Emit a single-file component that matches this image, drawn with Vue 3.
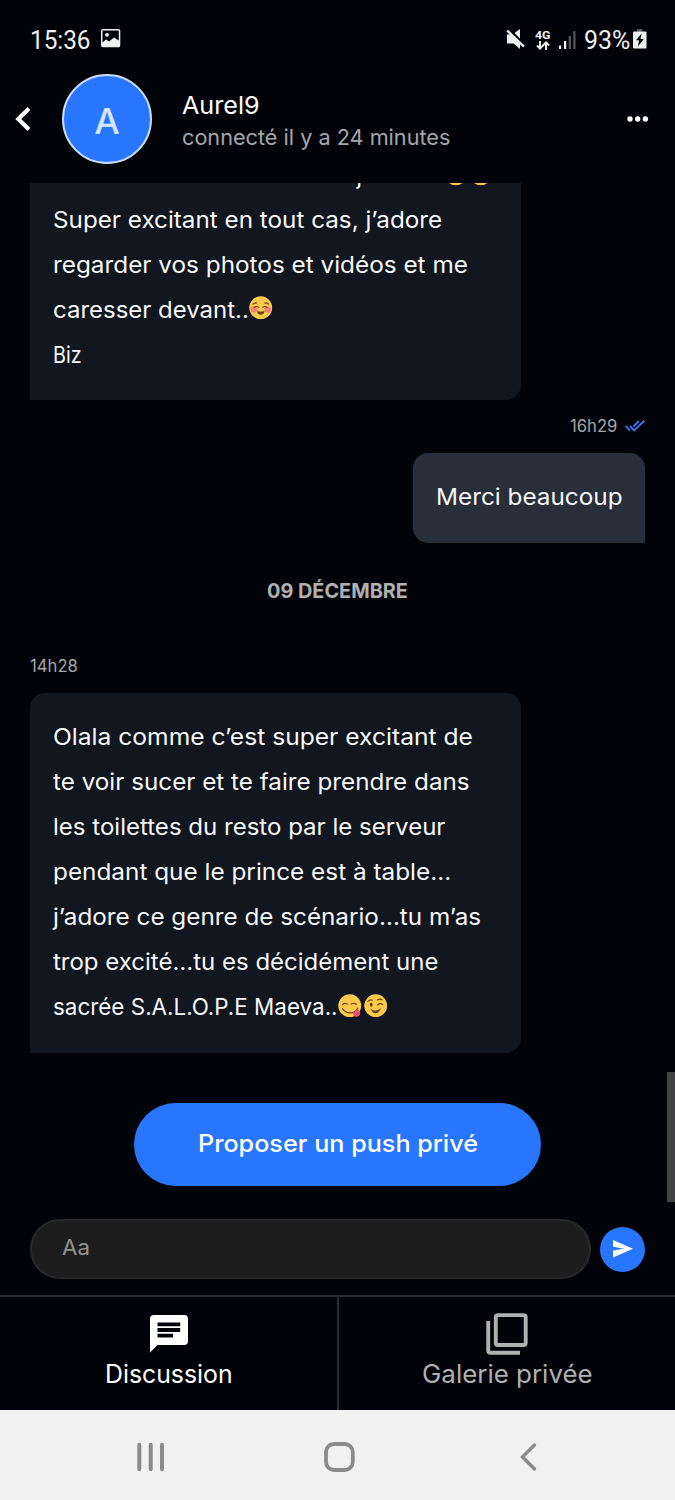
<script setup>
const firstMessage = [
  { text: 'Super excitant en tout cas, j’adore', width: 389 },
  { text: 'regarder vos photos et vidéos et me', width: 415 },
  { text: 'caresser devant..', width: 196, emojis: ['blush'] },
  { text: 'Biz', width: 29 },
]

const secondMessage = [
  { text: 'Olala comme c’est super excitant de', width: 420 },
  { text: 'te voir sucer et te faire prendre dans', width: 417 },
  { text: 'les toilettes du resto par le serveur', width: 392 },
  { text: 'pendant que le prince est à table…', width: 398 },
  { text: 'j’adore ce genre de scénario…tu m’as', width: 428 },
  { text: 'trop excité…tu es décidément une', width: 385 },
  { text: 'sacrée S.A.L.O.P.E Maeva..', width: 285, emojis: ['yum', 'wink'] },
]

// Stretches the text of an element horizontally to a given width.
const vFit = {
  mounted(el, { value }) {
    const apply = () => {
      const natural = el.offsetWidth
      el.style.transform = `scaleX(${value / natural})`
      el.style.marginRight = `${value - natural}px`
    }
    apply()
    document.fonts?.ready.then(apply)
  },
}
</script>

<template>
  <div class="phone">
    <svg class="defs" width="0" height="0" aria-hidden="true">
      <symbol id="blush" viewBox="0 0 24 24">
        <circle cx="12" cy="12" r="11.700" fill="#fdc94b" />
        <circle cx="5" cy="13.800" r="3.400" fill="#f47f72" />
        <circle cx="19" cy="13.800" r="3.400" fill="#f47f72" />
        <g fill="none" stroke="#674117" stroke-width="1.100" stroke-linecap="round">
          <path d="M4 8.300Q5.400 7 7.800 7M16.200 7Q18.600 7 20 8.300M5.500 11.600Q8 9.800 10 11.600M14 11.600Q16 9.800 18.500 11.600" />
          <path d="M9 16.200Q12 17.200 15 16.200Q14.500 18.500 12 18.500Q9.500 18.500 9 16.200Z" fill="#674117" />
        </g>
      </symbol>
      <symbol id="yum" viewBox="0 0 24 24">
        <circle cx="12" cy="12" r="11.700" fill="#fdc94b" />
        <g fill="none" stroke="#674117" stroke-width="1.200" stroke-linecap="round">
          <path d="M4.500 10.800Q7 8.500 9.500 10.300M13.500 10.300Q16 8.500 18.500 10.500" />
          <path d="M4.500 15Q8 20 13.500 19.200Q18.500 18.600 20 14.500" />
        </g>
        <path d="M15.500 18.700Q18 17.800 19.500 15.700Q22.500 16.500 22.600 20Q21.700 23.500 18.300 23.300Q15.200 22.800 15.500 18.700Z" fill="#e84c72" />
      </symbol>
      <symbol id="wink" viewBox="0 0 24 24">
        <circle cx="12" cy="12" r="11.700" fill="#fdc94b" />
        <ellipse cx="7.300" cy="11" rx="1.500" ry="2" fill="#674117" />
        <g fill="none" stroke="#674117" stroke-width="1.200" stroke-linecap="round">
          <path d="M4 7.500Q6 5.500 8.500 6.300M14 6Q16.500 4.500 18.500 6M14 11Q16.500 8.800 19 10.700" />
          <path d="M8 16.500Q12 18.700 16 16.200Q14.700 19 12 19Q9.500 19 8 16.500Z" fill="#674117" />
        </g>
      </symbol>
    </svg>

    <div class="status">
      <span v-fit="61" class="clock">15:36</span>
      <svg class="gallery" width="20" height="19" viewBox="0 0 20 19">
        <path fill="#f0f0f0" fill-rule="evenodd" d="M2 0H17.500Q19.300 0 19.300 2V16.300Q19.300 18.300 17.500 18.300H2Q0 18.300 0 16.300V2Q0 0 2 0ZM1.500 1.500V13.500L5 10.500L8 12.500L13 8.500L17.800 11.500V1.500Z" />
        <circle cx="6" cy="5.800" r="1.900" fill="#f0f0f0" />
      </svg>
      <span class="grow"></span>
      <svg class="mute" width="20" height="21" viewBox="0 0 20 21">
        <path d="M1 5.500H4L14 15V20L7.500 14.500H1ZM8.500 4L14 0V9.500Z" fill="#f0f0f0" />
        <path d="M1.200 1.700L18 17.700" stroke="#f0f0f0" stroke-width="2.300" />
      </svg>
      <span class="network">
        <span v-fit="15" class="generation">4G</span>
        <svg width="14" height="9" viewBox="0 0 14 9" fill="none" stroke="#e8e8e8" stroke-width="2">
          <path d="M4 0V7.500M1 4.500L4 7.500L7 4.500M10 9V1.500M7 4.500L10 1.500L13 4.500" />
        </svg>
      </span>
      <svg class="signal" width="17" height="18" viewBox="0 0 17 18">
        <path d="M0 14.500h2.200V18H0zM5 10h2.200v8H5z" fill="#f0f0f0" />
        <path d="M9.700 5h2.200v13H9.700zM14.300 0h2.200v18h-2.200z" fill="#55575a" />
      </svg>
      <span v-fit="46" class="percent">93%</span>
      <svg class="battery" width="14" height="20" viewBox="0 0 14 20">
        <path d="M4 0h5.500v3H4z" fill="#555" />
        <path d="M1 2.500H12.500Q13.500 2.500 13.500 3.500V18.500Q13.500 19.500 12.500 19.500H1Q0 19.500 0 18.500V3.500Q0 2.500 1 2.500Z" fill="#f0f0f0" />
        <path d="M8.500 4.500L3 11.300H6L5 17.500L10.700 10H7.500Z" fill="#08090c" />
      </svg>
    </div>

    <header class="header">
      <svg class="back" width="16" height="24" viewBox="0 0 16 24" fill="none" stroke="#fff" stroke-width="4.200">
        <path d="M14 1.500L3.300 12L14 22.500" />
      </svg>
      <div class="avatar">A</div>
      <div class="identity">
        <div class="name"><span v-fit="78">Aurel9</span></div>
        <div class="presence"><span v-fit="268">connecté il y a 24 minutes</span></div>
      </div>
      <svg class="more" width="22" height="6" viewBox="0 0 22 6" fill="#fff">
        <circle cx="3" cy="3" r="2.700" /><circle cx="10.700" cy="3" r="2.700" /><circle cx="18.400" cy="3" r="2.700" />
      </svg>
    </header>

    <main class="chat">
      <section class="bubble received clipped">
        <div class="line partial">
          <span class="stub">j</span>
          <svg class="emoji"><use href="#blush" /></svg>
          <svg class="emoji"><use href="#blush" /></svg>
        </div>
        <div v-for="line in firstMessage" :key="line.text" class="line">
          <span v-fit="line.width">{{ line.text }}</span>
          <svg v-for="emoji in line.emojis" :key="emoji" class="emoji"><use :href="'#' + emoji" /></svg>
        </div>
      </section>

      <div class="meta sent-meta">
        <span v-fit="47">16h29</span>
        <svg width="20" height="12" viewBox="0 0 20 12" fill="none" stroke="#4272e8" stroke-width="1.900">
          <path d="M.500 6L5 10.500M5 6L9.200 10.500L19.300 .700M8.500 6.500L14 1" />
        </svg>
      </div>
      <section class="bubble sent">
        <div class="line"><span v-fit="187">Merci beaucoup</span></div>
      </section>

      <h2 class="date"><span v-fit="141">09 DÉCEMBRE</span></h2>

      <div class="meta"><span v-fit="48">14h28</span></div>
      <section class="bubble received">
        <div v-for="line in secondMessage" :key="line.text" class="line">
          <span v-fit="line.width">{{ line.text }}</span>
          <svg v-for="emoji in line.emojis" :key="emoji" class="emoji"><use :href="'#' + emoji" /></svg>
        </div>
      </section>

      <button class="push"><span v-fit="280">Proposer un push privé</span></button>
    </main>

    <div class="composer">
      <div class="field"><span v-fit="28">Aa</span></div>
      <button class="send">
        <svg width="20" height="18" viewBox="0 0 20 18" fill="#fff">
          <path d="M0 0L20 8.700L0 17.400V10.600L11 8.700L0 6.800Z" />
        </svg>
      </button>
    </div>

    <nav class="tabs">
      <div class="tab active">
        <svg width="38" height="38" viewBox="0 0 38 38">
          <path fill="#fff" fill-rule="evenodd" d="M3.800 0H34.200Q38 0 38 3.800V26.200Q38 30 34.200 30H7.500L0 37.500V3.800Q0 0 3.800 0ZM7.500 7.500V11.300H30.200V7.500ZM7.500 13.100V16.900H30.200V13.100ZM7.500 18.800V22.500H23V18.800Z" />
        </svg>
        <span v-fit="128">Discussion</span>
      </div>
      <div class="tab">
        <svg class="stack" width="42" height="42" viewBox="0 0 42 42" fill="none" stroke="#b0b0b0" stroke-width="3.900">
          <rect x="9.800" y="2.100" width="29.900" height="29.900" rx="2" />
          <path d="M2.200 8V37.500Q2.200 39.800 4.500 39.800H34" />
        </svg>
        <span v-fit="171">Galerie privée</span>
      </div>
    </nav>

    <footer class="system">
      <svg width="675" height="90" viewBox="0 0 675 90" fill="none" stroke="#8b8b8b" stroke-linecap="round">
        <path stroke-width="4" d="M139.300 34.700V59.300M150.700 34.700V59.300M162 34.700V59.300" />
        <rect x="326" y="34" width="26.800" height="26" rx="8" stroke-width="3.800" />
        <path stroke-width="3.400" d="M534.500 35L522.500 47L534.500 59" />
      </svg>
    </footer>
    <div class="scrollbar"></div>
  </div>
</template>

<style>
body {
  margin: 0;
  background: #020308;
}
</style>

<style scoped>
.phone {
  position: relative;
  display: flex;
  flex-direction: column;
  width: 675px;
  height: 1500px;
  overflow: hidden;
  background: #020308;
  color: #f7f8fa;
  font-family: Inter, "Open Sans", sans-serif;
}
.phone * {
  box-sizing: border-box;
}
.phone span {
  display: inline-block;
  white-space: nowrap;
  transform-origin: left center;
}
.phone svg {
  display: block;
  flex: none;
}
.phone .defs {
  position: absolute;
}
button {
  border: 0;
  padding: 0;
  color: inherit;
  font: inherit;
}
.status {
  display: flex;
  align-items: center;
  flex: none;
  height: 73px;
  padding: 6px 28px 0 30px;
  font: 400 25.500px/30px Roboto, sans-serif;
  color: #f0f0f0;
}
.gallery {
  margin: -2px 0 0 10px;
}
.grow {
  flex: 1;
}
.mute {
  margin-right: 9px;
}
.phone .network {
  display: flex;
  flex-direction: column;
  align-items: center;
  width: 16px;
  margin-right: 8px;
}
.generation {
  align-self: flex-start;
  font: 700 11.500px/11px Roboto, sans-serif;
}
.signal {
  margin-right: 8px;
}
.battery {
  margin: -1px 0 0 3px;
}
.header {
  display: flex;
  flex: none;
  height: 109.500px;
  padding: 1px 26px 0 15px;
}
.back {
  margin-top: 33px;
}
.avatar {
  display: flex;
  align-items: center;
  justify-content: center;
  width: 90px;
  height: 90px;
  margin-left: 31px;
  padding-top: 4px;
  border: 2px solid #c9dcfb;
  border-radius: 50%;
  background: #2776fd;
  color: #d5e5ff;
  font-size: 36px;
  font-weight: 500;
}
.identity {
  flex: 1;
  margin-left: 30px;
  padding-top: 16px;
}
.name {
  height: 31px;
  color: #fff;
  font-size: 24.500px;
  line-height: 31px;
}
.presence {
  height: 33px;
  color: #a5a6a8;
  font-size: 21.500px;
  line-height: 32px;
}
.more {
  margin-top: 42px;
}
.chat {
  display: flex;
  flex: none;
  flex-direction: column;
  align-items: flex-start;
  height: 1036.500px;
  padding: 0 30px;
  overflow: hidden;
}
.bubble {
  flex: none;
  padding: 22.500px;
}
.received {
  width: 491px;
  border-radius: 15px 15px 15px 0;
  background: #12161e;
}
.clipped {
  margin-top: -30px;
  padding-top: 0;
}
.sent {
  align-self: flex-end;
  width: 232px;
  height: 90px;
  border-radius: 15px 15px 0 15px;
  background: #292e3b;
}
.line {
  display: flex;
  align-items: center;
  height: 45px;
  padding-bottom: 2px;
  font-size: 22.500px;
  line-height: 43px;
}
.emoji {
  width: 23.500px;
  height: 23.500px;
  margin: -2px 1px 0;
}
.partial {
  padding: 0 0 0 304px;
}
.stub {
  width: 86px;
}
.meta {
  display: flex;
  align-items: center;
  height: 52.500px;
  color: #a5a6a8;
  font-size: 17px;
}
.sent-meta {
  align-self: flex-end;
  gap: 8px;
}
.date {
  align-self: stretch;
  height: 97.500px;
  margin: 0;
  color: #b0b0b0;
  font-size: 20px;
  font-weight: 700;
  line-height: 97px;
  text-align: center;
}
.push {
  align-self: center;
  flex: none;
  width: 407px;
  height: 83px;
  margin-top: 50.500px;
  padding-bottom: 2px;
  border-radius: 42px;
  background: #2776fd;
  color: #fff;
  font-size: 24px;
  font-weight: 500;
}
.composer {
  display: flex;
  align-items: center;
  flex: none;
  gap: 9px;
  height: 75.500px;
  padding: 0 30px 15.500px;
}
.field {
  width: 561px;
  height: 60px;
  padding-left: 29.500px;
  border: 2px solid #292929;
  border-radius: 30px;
  background: #1d1d1d;
  color: #919191;
  font-size: 21.500px;
  line-height: 53px;
}
.send {
  display: flex;
  align-items: center;
  justify-content: center;
  width: 45px;
  height: 45px;
  padding-left: 1px;
  border-radius: 50%;
  background: #2776fd;
}
.tabs {
  display: flex;
  flex: 1;
  border-top: 2px solid #2a2b2e;
}
.tab {
  display: flex;
  flex: 1;
  flex-direction: column;
  align-items: center;
  padding-top: 18px;
  color: #b0b0b0;
  font-size: 25px;
  line-height: 43px;
}
.active {
  flex: 0 0 339px;
  border-right: 2px solid #2a2b2e;
  color: #fff;
}
.stack {
  margin: -2px 0;
}
.system {
  flex: none;
  height: 90px;
  background: #f1f1f1;
}
.scrollbar {
  position: absolute;
  top: 1072px;
  right: 0;
  width: 8px;
  height: 130px;
  background: #434345;
}
</style>
